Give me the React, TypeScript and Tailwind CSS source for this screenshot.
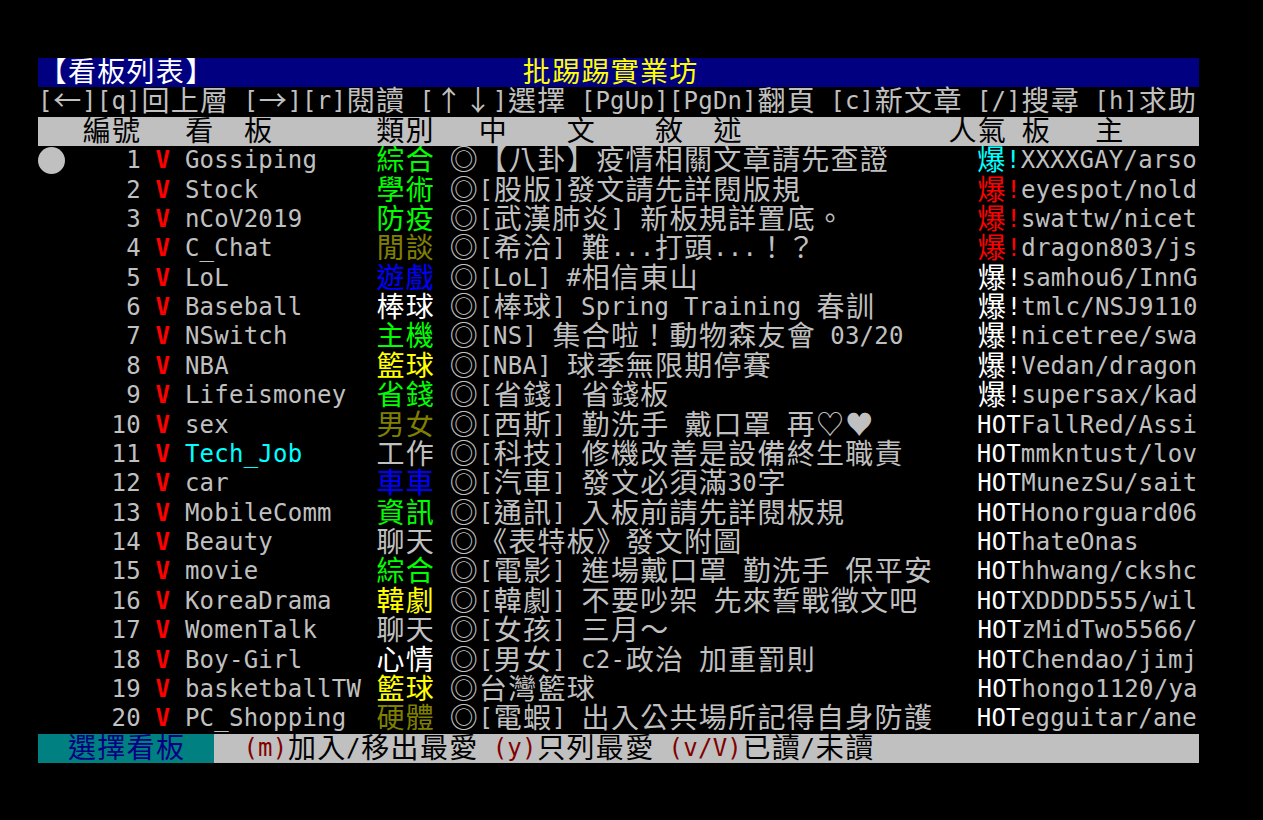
import clsx from "clsx";
import type { ReactNode } from "react";

type Seg = [string, string?, string?];

const C = {
  gray: "text-[#c0c0c0]",
  white: "text-white",
  red: "text-[#ff0000]",
  redBold: "text-[#ff0000] font-bold",
  green: "text-[#00ff00]",
  olive: "text-[#808000]",
  blue: "text-[#0000ff]",
  yellow: "text-[#ffff00]",
  cyan: "text-[#00ffff]",
  black: "text-black",
  navy: "text-[#000080]",
  maroon: "text-[#800000]",
};

const isWide = (ch: string) => ch.charCodeAt(0) > 0x7f;
const width = (s: string) => Array.from(s).reduce((n, ch) => n + (isWide(ch) ? 2 : 1), 0);
const pad = (s: string, n: number) => s + " ".repeat(Math.max(0, n - width(s)));

const BOARDS: [string, string, string, string, string, string, string][] = [
  ["Gossiping", "綜合", "green", "【八卦】疫情相關文章請先查證", "爆!", "cyan", "XXXXGAY/arso"],
  ["Stock", "學術", "green", "[股版]發文請先詳閱版規", "爆!", "red", "eyespot/nold"],
  ["nCoV2019", "防疫", "green", "[武漢肺炎] 新板規詳置底。", "爆!", "red", "swattw/nicet"],
  ["C_Chat", "閒談", "olive", "[希洽] 難...打頭...！？", "爆!", "red", "dragon803/js"],
  ["LoL", "遊戲", "blue", "[LoL] #相信東山", "爆!", "white", "samhou6/InnG"],
  ["Baseball", "棒球", "white", "[棒球] Spring Training 春訓", "爆!", "white", "tmlc/NSJ9110"],
  ["NSwitch", "主機", "green", "[NS] 集合啦！動物森友會 03/20", "爆!", "white", "nicetree/swa"],
  ["NBA", "籃球", "yellow", "[NBA] 球季無限期停賽", "爆!", "white", "Vedan/dragon"],
  ["Lifeismoney", "省錢", "green", "[省錢] 省錢板", "爆!", "white", "supersax/kad"],
  ["sex", "男女", "olive", "[西斯] 勤洗手 戴口罩 再♡♥", "HOT", "white", "FallRed/Assi"],
  ["Tech_Job", "工作", "gray", "[科技] 修機改善是設備終生職責", "HOT", "white", "mmkntust/lov"],
  ["car", "車車", "blue", "[汽車] 發文必須滿30字", "HOT", "white", "MunezSu/sait"],
  ["MobileComm", "資訊", "green", "[通訊] 入板前請先詳閱板規", "HOT", "white", "Honorguard06"],
  ["Beauty", "聊天", "gray", "《表特板》發文附圖", "HOT", "white", "hateOnas"],
  ["movie", "綜合", "green", "[電影] 進場戴口罩 勤洗手 保平安", "HOT", "white", "hhwang/ckshc"],
  ["KoreaDrama", "韓劇", "yellow", "[韓劇] 不要吵架 先來誓戰徵文吧", "HOT", "white", "XDDDD555/wil"],
  ["WomenTalk", "聊天", "gray", "[女孩] 三月～", "HOT", "white", "zMidTwo5566/"],
  ["Boy-Girl", "心情", "white", "[男女] c2-政治 加重罰則", "HOT", "white", "Chendao/jimj"],
  ["basketballTW", "籃球", "yellow", "台灣籃球", "HOT", "white", "hongo1120/ya"],
  ["PC_Shopping", "硬體", "olive", "[電蝦] 出入公共場所記得自身防護", "HOT", "white", "egguitar/ane"],
];

function cells(segs: Seg[], keyBase: string) {
  const out: ReactNode[] = [];
  segs.forEach(([text, color = C.gray, bg], i) => {
    Array.from(text).forEach((ch, j) => {
      const wide = isWide(ch);
      out.push(
        <span
          key={`${keyBase}-${i}-${j}`}
          className={clsx(
            "shrink-0 text-center whitespace-pre overflow-visible",
            wide
              ? "w-[29.3px] text-[28px] leading-[25px] font-['Noto_Sans_CJK_TC','Noto_Sans_CJK_JP',sans-serif]"
              : "w-[14.7px] text-[24px] leading-[29.375px] font-['DejaVu_Sans_Mono','Liberation_Mono',monospace]",
            color,
            bg
          )}
        >
          {ch}
        </span>
      );
    });
  });
  return out;
}

const Row = ({ segs, className, lead }: { segs: Seg[]; className?: string; lead?: ReactNode }) => (
  <div className={clsx("flex h-[29.375px]", className)}>
    {lead}
    {cells(segs, "c")}
  </div>
);

const BoardRow = ({ idx }: { idx: number }) => {
  const [name, cat, catColor, desc, pop, popColor, bm] = BOARDS[idx];
  const lead =
    idx === 0 ? (
      <span className="w-[29.3px] shrink-0 flex items-center">
        <span className="w-[27px] h-[27px] rounded-full bg-[#c0c0c0]" />
      </span>
    ) : (
      <span className="w-[29.3px] shrink-0" />
    );
  const segs: Seg[] = [
    [String(idx + 1).padStart(5, " ") + " "],
    ["V", C.redBold],
    [" "],
    [pad(name, 12) + " ", idx === 10 ? C.cyan : C.gray],
    [cat, C[catColor as keyof typeof C]],
    [" ◎"],
    [pad(desc, 34)],
    [pop, C[popColor as keyof typeof C]],
    [bm],
  ];
  return <Row segs={segs} lead={lead} />;
};

export default function App() {
  return (
    <div className="w-[1263px] h-[820px] bg-black pt-[58px] pl-[38px] overflow-hidden">
      <div className="w-[1161px] overflow-hidden">
        <Row
          className="bg-[#000080]"
          segs={[["【看板列表】", C.white], [" ".repeat(21)], ["批踢踢實業坊", C.yellow], [" ".repeat(35)]]}
        />
        <Row
          segs={[["[←][q]回上層 [→][r]閱讀 [↑↓]選擇 [PgUp][PgDn]翻頁 [c]新文章 [/]搜尋 [h]求助"]]}
        />
        <Row
          className="bg-[#c0c0c0]"
          segs={[
            [
              "   編號   看  板       類別   中    文    敘  述              人氣 板   主       ",
              C.black,
            ],
          ]}
        />
        {BOARDS.map((_, i) => (
          <BoardRow key={i} idx={i} />
        ))}
        <Row
          className="bg-[#c0c0c0]"
          segs={[
            ["  選擇看板  ", C.navy, "bg-[#008080]"],
            ["  ", C.black],
            ["(m)", C.maroon],
            ["加入/移出最愛 ", C.black],
            ["(y)", C.maroon],
            ["只列最愛 ", C.black],
            ["(v/V)", C.maroon],
            ["已讀/未讀" + " ".repeat(24), C.black],
          ]}
        />
      </div>
    </div>
  );
}
